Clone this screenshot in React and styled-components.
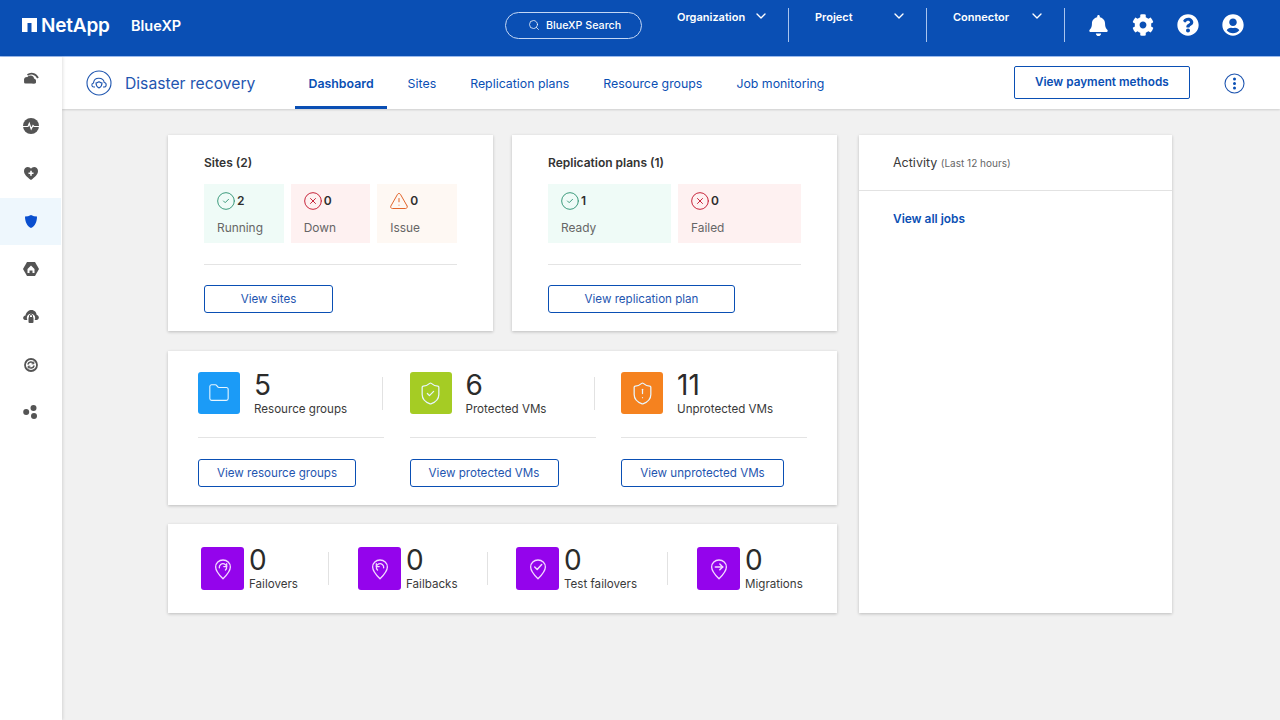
import React from "react";
import styled, { createGlobalStyle } from "styled-components";
import { FaBell, FaCog, FaQuestionCircle, FaUserCircle } from "react-icons/fa";
import { Search, ChevronDown, CircleCheck, CircleX, TriangleAlert, Folder, ShieldCheck, ShieldAlert } from "lucide-react";

const Global = createGlobalStyle`
  html, body { margin: 0; padding: 0; background: #f1f1f1; }
  body { font-family: Inter, "Liberation Sans", sans-serif; color: #2e2e2e; }
  * { box-sizing: border-box; }
`;

const Page = styled.div`
  width: 1280px; height: 720px; overflow: hidden;
  display: flex; flex-direction: column;
  background: #f1f1f1;
`;

const TopBar = styled.header`
  height: 57px; flex: none;
  display: flex; align-items: center;
  padding: 0 0 6px 22px;
  background: #0a4fb4;
  border-bottom: 1px solid #9dbdf0;
  color: #fff;
`;
const Logo = styled.div`
  display: flex; align-items: center; gap: 4px;
  width: 109px;
  font-size: 19px; font-weight: 600; letter-spacing: -0.2px;
`;
const Product = styled.div`
  width: 374px;
  font-size: 14.5px; font-weight: 600;
`;
const SearchPill = styled.div`
  width: 137px; height: 27px;
  display: flex; align-items: center; gap: 6px;
  padding-left: 22px;
  border: 1px solid #c4d7f5;
  border-radius: 14px;
  font-size: 10.7px; font-weight: 500;
`;
const Scope = styled.div`
  width: ${(p) => p.$w}px; height: 34px;
  margin-left: ${(p) => p.$ml}px;
  padding: 2px 19px 0 ${(p) => p.$pl}px;
  display: flex; align-items: flex-start; justify-content: space-between;
  border-right: 1px solid #a9c4ee;
  font-size: 11px; font-weight: 600;
  svg { margin-top: -2px; }
`;
const TopIcons = styled.div`
  display: flex; align-items: center; gap: 23px;
  margin-left: 23px;
`;

const Body = styled.div`
  flex: 1; display: flex; min-height: 0;
`;
const Sidebar = styled.nav`
  width: 62px; flex: none;
  display: flex; flex-direction: column;
  background: #fff;
  box-shadow: 1px 0 3px rgba(0,0,0,.12);
  z-index: 2;
`;
const SideItem = styled.div`
  height: 47.7px; width: 61px; flex: none;
  display: flex; align-items: center; justify-content: center;
  background: ${(p) => (p.$active ? "#eef7fd" : "transparent")};
  &:first-child { height: 42px; margin-bottom: 3.3px; }
`;
const Main = styled.div`
  flex: 1; display: flex; flex-direction: column; min-width: 0;
`;
const SubBar = styled.div`
  height: 52px; flex: none;
  display: flex; align-items: center;
  padding-left: 24px;
  background: #fff;
  box-shadow: 0 1px 2px rgba(0,0,0,.15);
`;
const SubTitle = styled.div`
  width: 170px; margin-left: 13px;
  color: #1f56b0; font-size: 15.7px; font-weight: 400;
`;
const Tabs = styled.div`
  display: flex; align-items: stretch; height: 52px;
`;
const Tab = styled.div`
  display: flex; align-items: center;
  padding: 4px 13.5px 0;
  margin-right: 7px;
  border-bottom: 3px solid ${(p) => (p.$active ? "#0a4fb4" : "transparent")};
  color: #0a4fb4;
  font-size: 12.35px;
  font-weight: ${(p) => (p.$active ? 600 : 400)};
  white-space: nowrap;
`;
const PayButton = styled.div`
  width: 176px; height: 33px;
  margin: 0 0 2px 169px;
  display: flex; align-items: center; justify-content: center;
  background: #fff;
  border: 1px solid #0a4fb4;
  border-radius: 2px;
  color: #0a4fb4; font-size: 11.75px; font-weight: 600;
`;
const MoreWrap = styled.div`
  margin-left: 34px; display: flex;
`;

const Dash = styled.main`
  display: grid;
  grid-template-columns: 669px 313px;
  column-gap: 22px;
  padding: 26px 0 0 106px;
`;
const LeftCol = styled.div`
  display: flex; flex-direction: column; gap: 19px;
`;
const TopCards = styled.div`
  display: grid; grid-template-columns: 325px 325px; column-gap: 19px;
  margin-bottom: 1px;
`;
const Card = styled.section`
  background: #fff;
  box-shadow: 0 1px 3px rgba(0,0,0,.22);
`;
const SummaryCard = styled(Card)`
  height: 196px;
  padding: 21px 36px 0;
`;
const CardTitle = styled.h2`
  margin: 0; height: 14px; line-height: 14px;
  font-size: 12px; font-weight: 600; color: #333;
`;
const Tiles = styled.div`
  display: grid;
  grid-template-columns: repeat(${(p) => p.$n}, 1fr);
  gap: 7px;
  margin-top: 14px;
`;
const Tile = styled.div`
  height: 59px;
  padding: 8px 0 0 13px;
  background: ${(p) => p.$bg};
`;
const TileTop = styled.div`
  display: flex; align-items: center; gap: 1px;
  height: 17px;
  font-size: 12px; font-weight: 600; color: #2e2e2e;
  svg { margin-left: -1px; flex: none; }
`;
const TileLabel = styled.div`
  margin-top: 11px;
  font-size: 11.9px; color: #666;
`;
const Rule = styled.div`
  height: 1px; background: #e4e4e4;
  margin-top: 21px;
`;
const OutlineButton = styled.div`
  width: ${(p) => p.$w}px; height: 28px;
  margin-top: ${(p) => p.$mt}px;
  display: flex; align-items: center; justify-content: center;
  border: 1px solid #0a4fb4;
  border-radius: 3px;
  color: #1f56b0; font-size: 11.6px;
`;
const StatsCard = styled(Card)`
  height: 154px;
  padding: 21px 31px 0 30px;
  display: grid;
  grid-template-columns: 186px 186px 186px;
  column-gap: 25.5px;
`;
const StatRow = styled.div`
  display: flex; align-items: flex-start; height: 44px; position: relative;
`;
const IconSquare = styled.div`
  width: ${(p) => p.$s}px; height: ${(p) => p.$s}px; flex: none;
  display: flex; align-items: center; justify-content: center;
  background: ${(p) => p.$bg};
  border-radius: 3px;
`;
const StatText = styled.div`
  margin-left: ${(p) => p.$ml}px;
  margin-top: -1px;
`;
const StatNum = styled.div`
  font-size: 28px; line-height: 28px; font-weight: 400; color: #2b2b2b;
`;
const StatLabel = styled.div`
  margin-top: 3px;
  font-size: 11.6px; line-height: 14px; color: #3a3a3a;
  white-space: nowrap;
`;
const VRule = styled.div`
  position: absolute; right: 1px; top: 5px;
  width: 1px; height: 33px; background: #e2e2e2;
`;
const OpsCard = styled(Card)`
  height: 89px;
  padding: 23px 0 0 33px;
  display: flex;
`;
const OpItem = styled.div`
  width: ${(p) => p.$w}px; display: flex; align-items: flex-start; position: relative;
`;
const OpRule = styled.div`
  position: absolute; left: ${(p) => p.$x}px; top: 5px;
  width: 1px; height: 33px; background: #e2e2e2;
`;
const ActivityCard = styled(Card)`
  height: 478px;
`;
const ActivityHead = styled.div`
  height: 56px; padding: 20px 0 0 34px;
  border-bottom: 1px solid #e2e2e2;
  font-size: 12.5px; color: #3a3a3a;
  small { font-size: 10px; color: #666; }
`;
const ActivityLink = styled.div`
  padding: 20px 0 0 34px;
  color: #0a4fb4; font-size: 11.9px; font-weight: 600;
`;

const gray = "#545454";
const sideIcons = [
  <svg width="16" height="12" viewBox="0 0 16 12" fill={gray}><circle cx="4" cy="8" r="3" /><circle cx="7.500" cy="7" r="3.500" /><circle cx="10.500" cy="9" r="2.500" /><rect x="1" y="8.500" width="12" height="3" rx="1.500" /><path d="M4.500 3C7.500.8 12.500 1 15 6" fill="none" stroke={gray} strokeWidth="1.800" /></svg>,
  <svg width="16" height="16" viewBox="0 0 16 16"><circle cx="8" cy="8" r="8" fill={gray}/><path d="M0 8.500H5L6.300 5.500 8.200 11 10 7.500 11 8.500H16" fill="none" stroke="#fff" strokeWidth="1.200"/></svg>,
  <svg width="14" height="13" viewBox="0 0 14 13"><path d="M7 13C3 10 0 7.500 0 4 0 1.500 2 0 3.800 0 5.200 0 6.300.7 7 1.800 7.700.7 8.800 0 10.200 0 12 0 14 1.500 14 4 14 7.500 11 10 7 13Z" fill={gray}/><path d="M7 3.800V8.800M4.500 6.300H9.500" stroke="#fff" strokeWidth="1.600"/></svg>,
  <svg width="12" height="13" viewBox="0 0 12 13"><path d="M0 1.500C2 1.500 4 1 6 0 8 1 10 1.500 12 1.500 12 7 10 11 6 13 2 11 0 7 0 1.500Z" fill="#0a4fcf"/></svg>,
  <svg width="16" height="14" viewBox="0 0 16 14"><path d="M4 0H12L16 7 12 14H4L0 7Z" fill={gray}/><path d="M8 3.500L11.500 7V11H9.500V8.500H6.500V11H4.500V7Z" fill="#fff"/></svg>,
  <svg width="16" height="13" viewBox="0 0 16 13"><path d="M2 10C-.5 9.500-.5 6 2.500 5.500 3 2 6 0 8.500 0 11.500 0 13.500 2.500 13.700 5 16.500 5.500 16.500 9.500 14 10Z" fill={gray}/><circle cx="8" cy="8" r="4.200" fill="#fff"/><rect x="5.500" y="7" width="5" height="6" rx="1" fill={gray}/><path d="M6.500 7V6a1.500 1.500 0 0 1 3 0v1" fill="none" stroke={gray} strokeWidth="1"/></svg>,
  <svg width="14" height="14" viewBox="0 0 14 14" fill="none" stroke={gray}><circle cx="7" cy="7" r="6" strokeWidth="1.800"/><path d="M3.800 6.500A3.300 3.300 0 0 1 9.800 5.500M10.200 7.500A3.300 3.300 0 0 1 4.200 8.500" strokeWidth="1.400"/><path d="M9.800 3.500V5.800H7.600M4.200 10.500V8.200H6.400" strokeWidth="1"/></svg>,
  <svg width="16" height="14" viewBox="0 0 16 14" fill={gray}><circle cx="3.200" cy="7" r="3"/><circle cx="10.500" cy="3" r="3"/><circle cx="11" cy="11" r="3"/></svg>,
];

const Pin = ({ glyph }) => (
  <svg width="18" height="22" viewBox="0 0 22 26" fill="none" stroke="#f3d9ff" strokeWidth="1.600" strokeLinecap="round" strokeLinejoin="round">
    <path d="M11 25C6 20 2 15.500 2 10.500 2 5.500 6 2 11 2s9 3.500 9 8.500C20 15.500 16 20 11 25Z" />
    {glyph === "fail" && <><path d="M6.500 11.500A4.500 4.500 0 1 1 14 14.200" /><path d="M15.500 6.500V10H12" /></>}
    {glyph === "back" && <><path d="M15.500 11.500A4.500 4.500 0 1 0 8 14.200" /><path d="M6.500 6.500V10H10" /></>}
    {glyph === "check" && <path d="M7 10.500L10 13.500 15.500 7.500" strokeWidth="1.800" />}
    {glyph === "arrow" && <><path d="M6.500 10.500H15.500" strokeWidth="1.800" /><path d="M12 7L15.500 10.500 12 14" strokeWidth="1.800" /></>}
  </svg>
);

const stats = [
  { n: "5", l: "Resource groups", bg: "#1b9bf7", b: "View resource groups", w: 158, I: Folder, s: 22, rule: true },
  { n: "6", l: "Protected VMs", bg: "#a5cc24", b: "View protected VMs", w: 149, I: ShieldCheck, s: 25, rule: true },
  { n: "11", l: "Unprotected VMs", bg: "#f5821f", b: "View unprotected VMs", w: 163, I: ShieldAlert, s: 25 },
];
const ops = [
  { n: "Failovers", g: "fail", w: 157, r: 127 },
  { n: "Failbacks", g: "back", w: 158, r: 129 },
  { n: "Test failovers", g: "check", w: 181, r: 151 },
  { n: "Migrations", g: "arrow", w: 120 },
];

export default function App() {
  return (
    <Page>
      <Global />
      <TopBar>
        <Logo>
          <svg width="15" height="14" viewBox="0 0 15 14" fill="#fff"><path d="M0 0H15V14H9.500V5H5.500V14H0Z" /></svg>
          NetApp
        </Logo>
        <Product>BlueXP</Product>
        <SearchPill><Search size={12} strokeWidth={1.5} />BlueXP Search</SearchPill>
        <Scope $w={112} $ml={35} $pl={0}>Organization<ChevronDown size={16} strokeWidth={2} /></Scope>
        <Scope $w={138} $ml={0} $pl={26}>Project<ChevronDown size={16} strokeWidth={2} /></Scope>
        <Scope $w={138} $ml={0} $pl={26}>Connector<ChevronDown size={16} strokeWidth={2} /></Scope>
        <TopIcons>
          <FaBell size={21} />
          <FaCog size={22} />
          <FaQuestionCircle size={22} />
          <FaUserCircle size={22} />
        </TopIcons>
      </TopBar>
      <Body>
        <Sidebar>
          {sideIcons.map((ic, i) => (
            <SideItem key={i} $active={i === 3}>{ic}</SideItem>
          ))}
        </Sidebar>
        <Main>
          <SubBar>
            <svg width="26" height="26" viewBox="0 0 26 26" fill="none" stroke="#1f56b0" strokeWidth="1.100">
              <circle cx="13" cy="13" r="12" />
              <path d="M9 17H7.800C5.500 17 5 13.500 7.500 13 7.800 10 10 8.300 12.800 8.300 15.500 8.300 17.800 10 18.200 12.500 21 13 20.700 17 18 17H17" />
              <path d="M13 11.800C15 13 15.500 13 16 13 16 15.500 15 17 13 18 11 17 10 15.500 10 13 10.500 13 11 13 13 11.800Z" />
            </svg>
            <SubTitle>Disaster recovery</SubTitle>
            <Tabs>
              <Tab $active>Dashboard</Tab>
              <Tab>Sites</Tab>
              <Tab>Replication plans</Tab>
              <Tab>Resource groups</Tab>
              <Tab>Job monitoring</Tab>
            </Tabs>
            <PayButton>View payment methods</PayButton>
            <MoreWrap>
              <svg width="21" height="21" viewBox="0 0 21 21"><circle cx="10.500" cy="10.500" r="9.500" fill="none" stroke="#1f56b0" strokeWidth="1.100" /><circle cx="10.500" cy="6" r="1.500" fill="#0a4fb4" /><circle cx="10.500" cy="10.500" r="1.500" fill="#0a4fb4" /><circle cx="10.500" cy="15" r="1.500" fill="#0a4fb4" /></svg>
            </MoreWrap>
          </SubBar>
          <Dash>
            <LeftCol>
              <TopCards>
                <SummaryCard>
                  <CardTitle>Sites (2)</CardTitle>
                  <Tiles $n={3}>
                    <Tile $bg="#effbf7">
                      <TileTop><CircleCheck size={20} color="#3d9b7d" strokeWidth={1.200} />2</TileTop>
                      <TileLabel>Running</TileLabel>
                    </Tile>
                    <Tile $bg="#fef1f1">
                      <TileTop><CircleX size={20} color="#c8263c" strokeWidth={1.200} />0</TileTop>
                      <TileLabel>Down</TileLabel>
                    </Tile>
                    <Tile $bg="#fef8f3">
                      <TileTop><TriangleAlert size={20} color="#e2642a" strokeWidth={1.200} />0</TileTop>
                      <TileLabel>Issue</TileLabel>
                    </Tile>
                  </Tiles>
                  <Rule />
                  <OutlineButton $w={129} $mt={20}>View sites</OutlineButton>
                </SummaryCard>
                <SummaryCard>
                  <CardTitle>Replication plans (1)</CardTitle>
                  <Tiles $n={2}>
                    <Tile $bg="#effbf7">
                      <TileTop><CircleCheck size={20} color="#3d9b7d" strokeWidth={1.200} />1</TileTop>
                      <TileLabel>Ready</TileLabel>
                    </Tile>
                    <Tile $bg="#fef1f1">
                      <TileTop><CircleX size={20} color="#c8263c" strokeWidth={1.200} />0</TileTop>
                      <TileLabel>Failed</TileLabel>
                    </Tile>
                  </Tiles>
                  <Rule />
                  <OutlineButton $w={187} $mt={20}>View replication plan</OutlineButton>
                </SummaryCard>
              </TopCards>
              <StatsCard>
                {stats.map(({ n, l, bg, b, w, I, s, rule }) => (
                  <div key={l}>
                    <StatRow>
                      <IconSquare $s={42} $bg={bg}><I size={s} color="#e8f6ff" strokeWidth={1.200} /></IconSquare>
                      <StatText $ml={14}>
                        <StatNum>{n}</StatNum>
                        <StatLabel>{l}</StatLabel>
                      </StatText>
                      {rule && <VRule />}
                    </StatRow>
                    <Rule />
                    <OutlineButton $w={w} $mt={21}>{b}</OutlineButton>
                  </div>
                ))}
              </StatsCard>
              <OpsCard>
                {ops.map(({ n, g, w, r }) => (
                  <OpItem key={n} $w={w}>
                    <IconSquare $s={43} $bg="#9404ec"><Pin glyph={g} /></IconSquare>
                    <StatText $ml={5}>
                      <StatNum>0</StatNum>
                      <StatLabel>{n}</StatLabel>
                    </StatText>
                    {r && <OpRule $x={r} />}
                  </OpItem>
                ))}
              </OpsCard>
            </LeftCol>
            <ActivityCard>
              <ActivityHead>Activity <small>(Last 12 hours)</small></ActivityHead>
              <ActivityLink>View all jobs</ActivityLink>
            </ActivityCard>
          </Dash>
        </Main>
      </Body>
    </Page>
  );
}
